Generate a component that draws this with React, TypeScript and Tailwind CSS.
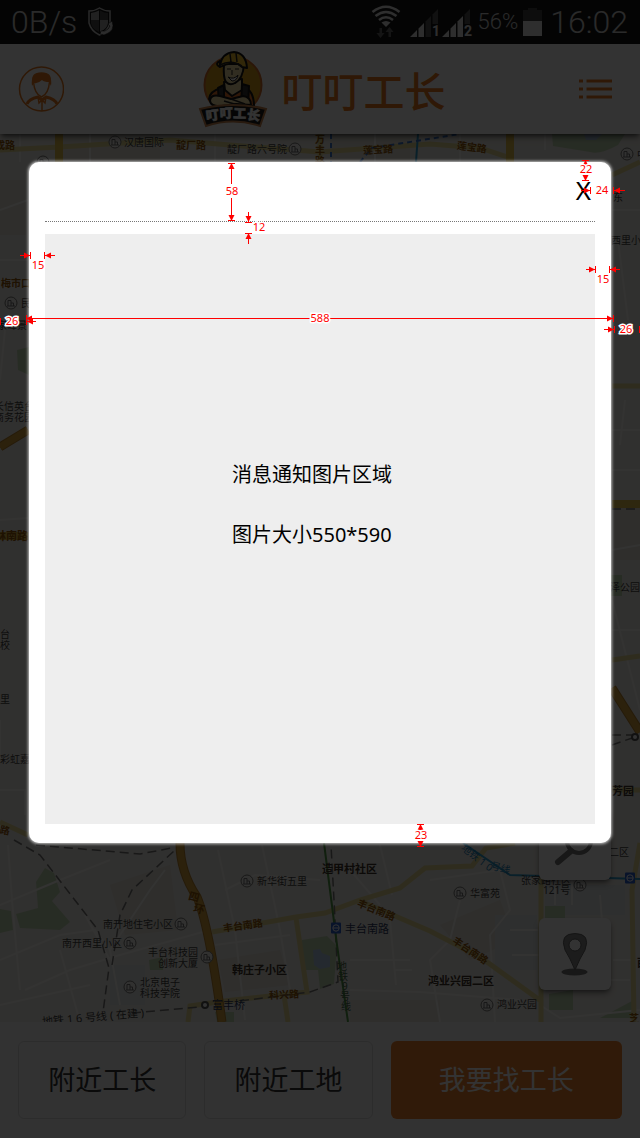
import React from "react";

const CJK = "font-['Noto_Sans','Noto_Sans_CJK_SC',sans-serif]";

type LabelProps = {
  x: number;
  y: number;
  text: string;
  size?: number;
  kind?: "place" | "area" | "road" | "station" | "green" | "blue";
  rotate?: number;
};

const labelColors = {
  place: "#444444",
  area: "#3f3428",
  road: "#95590a",
  station: "#2c3a62",
  green: "#46694b",
  blue: "#1c82b8",
};

function Label({ x, y, text, size = 10, kind = "place", rotate = 0 }: LabelProps) {
  return (
    <text
      x={x}
      y={y}
      fontSize={size}
      fill={labelColors[kind]}
      fontWeight={kind === "area" || kind === "road" ? 700 : 400}
      dominantBaseline="central"
      transform={rotate ? `rotate(${rotate} ${x} ${y})` : undefined}
    >
      {text}
    </text>
  );
}

function Poi({ x, y }: { x: number; y: number }) {
  return (
    <g transform={`translate(${x} ${y})`} fill="none" stroke="#777">
      <circle r="6" fill="#f4f2ee" />
      <path d="M-3 3V-2.500H0V3M0 0H2.500V3M-4 3H4" />
    </g>
  );
}

function Metro({ x, y }: { x: number; y: number }) {
  return (
    <g transform={`translate(${x} ${y})`} fill="none" stroke="#fff">
      <rect x="-5" y="-5.500" width="10" height="11" rx="1" fill="#2b5fd0" stroke="none" />
      <circle r="3.200" />
      <path d="M-3 0H3" />
    </g>
  );
}

function CityMap() {
  return (
    <svg
      className={`absolute inset-0 h-full w-full ${CJK}`}
      viewBox="0 134 640 888"
      preserveAspectRatio="xMidYMin slice"
      aria-label="地图"
    >
      <rect y="134" width="640" height="888" fill="#f1eee8" />
      <g fill="#e8e4db">
        <path d="M60 134H160V162H60zM330 134H410V162H330zM0 180H26V235H0zM614 500H640V560H614z" />
        <path d="M110 885 170 865 178 930 125 935zM218 960 280 950 290 985 225 992zM440 925 500 900 515 940 470 960zM350 1000H440V1022H350z" />
      </g>
      <g fill="#e3e8e8">
        <path d="M110 965H145V1005H110zM545 885H625V915H545zM495 915H537V970H495z" />
      </g>
      <g fill="#c4dbb6">
        <path d="M552 134H625L618 145Q600 155 590 152L553 146z" />
        <path d="M17 350 29 347V375L18 370zM611 575H622V596H611z" />
        <path d="M36 882 45 868 54 873 60 892 52 901 70 922 60 930 20 928 16 914 38 908zM0 909 11 911 13 930 0 933z" />
        <path d="M149 960 163 957V970L150 970z" />
        <path d="M302 940 327 936 337 946 334 984 320 989 318 970 302 970z" />
        <path d="M545 906H565V918H545zM549 994 573 990V1010H549zM600 1018 632 1001V1018zM215 1012H234V1022H217z" />
      </g>
      <path d="M584 134H602L596 140H586zM313 950 320 949 322 953 330 956V967L320 969 314 965z" fill="#b4cbe8" />
      <g fill="none" stroke="#fffdf8" strokeWidth="2">
        <path d="M8 845 12 900 20 990M0 905 60 880 110 860M0 960 60 935 95 930 110 950M25 990 70 970 120 955 210 930M85 915 110 960M60 950 80 1022M120 1005 110 950 150 890 165 870M0 1005 90 985" />
        <path d="M218 850 235 930 245 1020M262 845 280 930 290 990M225 890 255 875 320 880M350 870 380 905M380 845 392 895M390 920 396 985M350 960H410M395 970H412M215 945 290 935" />
        <path d="M430 880 500 870 510 910 490 935 495 1022M460 900 450 940 430 960 440 1022M510 930H540M512 955H540M555 880V905M572 880V905M600 895 605 960M613 960H632M545 980H630M350 990 420 992 520 1000M540 1005 560 1018 640 1010" />
        <path d="M20 134V162M90 134V162M215 134V162M375 134V162M460 134V162M545 134V150M0 210 28 200M0 260H28M5 330 0 380M612 210H640M618 240 628 320M612 430H640M625 400 620 445M612 470H640M612 550 640 545M612 600 640 710M612 630H640M0 520 28 518M0 790H25V815M0 720V760" />
      </g>
      <g fill="none" stroke="#e8dd95" strokeWidth="5">
        <path d="M0 150 60 147 170 140 230 145 320 152 430 144 480 148 510 158M320 134V162" />
        <path d="M0 822 28 835M612 386H640M612 660 640 656M612 175 640 162M612 790H640" />
        <path d="M212 932 296 917 325 913 360 900 400 888 425 868 472 866 486 848 515 843M360 901 430 931 480 957 541 1001M296 918 307 992 225 1001 190 1006 188 1022M284 995 288 1022M541 875V1022M640 843 632 890 634 1022" />
      </g>
      <g fill="none" stroke="#e7c14a" strokeWidth="8">
        <path d="M59 134V162M510 134V162M612 504H640M0 536H28" />
      </g>
      <g fill="none" stroke="#b98330" strokeWidth="9">
        <path d="M180 843Q180 872 197 897Q209 925 222 1022M0 447 28 430M612 688 640 732" />
      </g>
      <g fill="none" stroke="#d9a63c" strokeWidth="7">
        <path d="M180 843Q180 872 197 897Q209 925 222 1022M0 447 28 430M612 688 640 732" />
      </g>
      <g fill="none" stroke="#777" strokeWidth="1.500" strokeDasharray="9 5">
        <path d="M14 840 40 855 98 930 109 968 103 1012M112 965 120 915 132 890 175 850M36 845 140 854 172 848" />
        <path d="M132 1013 200 1007M240 1001 310 992 338 982 334 900 331 845M612 509H640M612 735H640M612 745 635 737" />
      </g>
      <g fill="none" strokeWidth="2">
        <path d="M324 843 337 945 348 1022" stroke="#4f9a46" />
        <path d="M463 843 510 875 640 879M418 134 416 162" stroke="#2f9fd0" />
        <path d="M360 162 372 148 460 134M331 134V162" stroke="#3d78cf" strokeDasharray="5 4" />
      </g>

      <Label x={-15} y={145} text="大成路" kind="road" />
      <Poi x={115} y={142} />
      <Label x={124} y={142} text="汉唐国际" />
      <Label x={176} y={145} text="靛厂路" kind="road" />
      <Label x={227} y={149} text="靛厂路六号院" />
      <Poi x={295} y={149} />
      <Label x={315} y={139} text="万" kind="road" />
      <Label x={315} y={150} text="丰" kind="road" />
      <Label x={315} y={161} text="路" kind="road" />
      <Label x={363} y={150} text="莲宝路" kind="road" rotate={-3} />
      <Label x={457} y={145} text="莲宝路" kind="road" rotate={7} />
      <Poi x={627} y={154} />
      <Label x={637} y={154} text="中" />
      <Poi x={43} y={162} />
      <Label x={613} y={197} text="东" />
      <Label x={611} y={240} text="西里小区" />

      <Label x={1} y={283} text="梅市口" kind="road" />
      <Poi x={11} y={303} />
      <Label x={21} y={303} text="民岳" />
      <Label x={-3} y={325} text="家峰景" />
      <Label x={-6} y={406} text="长信英台" />
      <Label x={-6} y={417} text="商务花园" />
      <Label x={-5} y={535} text="林南路" size={11} kind="road" />
      <Label x={0} y={634} text="台" />
      <Label x={0} y={645} text="校" />
      <Label x={0} y={699} text="里" />
      <Label x={0} y={759} text="彩虹嘉园" />
      <Label x={0} y={829} text="路" kind="road" rotate={10} />
      <Label x={610} y={587} text="泽公园" />
      <circle cx="635" cy="737" r="3" fill="#fff" stroke="#555" strokeWidth="2" />
      <Label x={612} y={790} text="芳园" size={11} kind="area" />
      <Label x={609} y={852} text="二区" />

      <Label x={189} y={895} text="四" kind="road" size={11} rotate={15} />
      <Label x={194} y={907} text="环" kind="road" size={11} rotate={15} />
      <Label x={103} y={924} text="南开地住宅小区" />
      <Poi x={181} y={924} />
      <Label x={62} y={943} text="南开西里小区" />
      <Poi x={130} y={943} />
      <Label x={148} y={952} text="丰台科技园" />
      <Label x={158} y={963} text="创新大厦" />
      <Poi x={207} y={957} />
      <Poi x={130} y={987} />
      <Label x={140} y={982} text="北京电子" />
      <Label x={140} y={993} text="科技学院" />
      <Label x={42} y={1021} text="地铁 1 6 号线 ( 在建 )" rotate={-5} size={11} />
      <circle cx="205" cy="1005" r="3" fill="#fff" stroke="#555" strokeWidth="2" />
      <Label x={212} y={1004} text="富丰桥" size={11} kind="station" />

      <Label x={322} y={868} text="造甲村社区" size={11} kind="area" />
      <Poi x={247} y={881} />
      <Label x={257} y={881} text="新华街五里" />
      <Label x={223} y={928} text="丰台南路" kind="road" rotate={-8} />
      <Label x={358} y={902} text="丰台南路" kind="road" rotate={22} />
      <Metro x={336} y={928} />
      <Label x={345} y={928} text="丰台南路" size={11} kind="station" />
      <Label x={232} y={969} text="韩庄子小区" size={11} kind="area" />
      <Label x={269} y={995} text="科兴路" kind="road" rotate={-3} />
      {["地", "铁", "9", "号", "线"].map((c, i) => (
        <Label key={c} x={c === "9" ? 342 : 337 + i} y={966 + i * 10} text={c} kind="green" />
      ))}

      <Label x={463} y={846} text="地铁 1 0" kind="blue" rotate={38} />
      <Label x={491} y={865} text="号线" kind="blue" rotate={15} />
      <Metro x={630} y={878} />
      <Label x={521} y={880} text="张家路社区" />
      <Label x={543} y={890} text="121号" />
      <Poi x={580} y={885} />
      <Poi x={460} y={893} />
      <Label x={470} y={893} text="华富苑" />
      <Label x={454} y={939} text="丰台南路" kind="road" rotate={34} />
      <Label x={428} y={980} text="鸿业兴园二区" size={11} kind="area" />
      <Poi x={487} y={1005} />
      <Label x={497} y={1004} text="鸿业兴园" />
      <Label x={637} y={962} text="西" size={11} kind="area" />
      <Label x={629} y={1018} text="芝" kind="road" />
    </svg>
  );
}

function ShieldIcon() {
  return (
    <svg className="ml-[10px] h-[30px] w-[28px]" viewBox="87 8 28 30" aria-hidden="true">
      <path d="M89 12Q95 12 99.500 9Q104 12 110 12V24Q108 32 99.500 36Q91 32 89 24z" fill="none" stroke="#ccc" strokeWidth="1.500" />
      <path d="M91 14Q96 13 99 11.500V21H91zM100 21H108V24Q107 30 100 33z" fill="#ccc" opacity=".8" />
      <path d="M100 11.500Q104 14 108 14V21H100zM91 21H99V33Q92 30 91 24z" fill="#ccc" opacity=".3" />
      <path d="M112 22Q116 32 104 36L100 35 101 32 105 32Q109 30 110 27L108 25z" fill="#ddd" stroke="#000" strokeWidth=".5" />
    </svg>
  );
}

function WifiIcon() {
  return (
    <svg className="h-[34px] w-[30px]" viewBox="373 4 30 34" fill="none" stroke="#e5e5e5" strokeWidth="2.500" aria-hidden="true">
      <path d="M374.500 11Q388 .5 401.500 11M377.500 15Q388 7 398.500 15M381 19Q388 13.500 395 19" />
      <path d="M383.500 21.500Q388 18.500 392.500 21.500L388 26z" fill="#e5e5e5" stroke="none" />
      <path d="M381.500 27h2.500v5h2.500l-4 5-4-5h3zM390.500 36h2.500v-5h2.500l-4-5-4 5h3z" fill="#666" stroke="none" />
    </svg>
  );
}

function SignalIcon({ sim, bars }: { sim: string; bars: number }) {
  return (
    <svg className="h-[32px] w-[32px] font-['Roboto',sans-serif]" viewBox="0 0 32 32" aria-hidden="true">
      <path d="M0 31 7 24V31zM8.500 22.500 14 17V31H8.500z" fill="#e5e5e5" />
      <path d="M15.500 15.500 21 10V31H15.500z" fill={bars > 2 ? "#e5e5e5" : "#555"} />
      <path d="M22.500 8.500 28 3V18H22.500z" fill="#555" />
      <text x="22" y="30" fontSize="14" fontWeight="700" fill="#e5e5e5">{sim}</text>
    </svg>
  );
}

function StatusBar() {
  return (
    <div className="flex h-11 items-center justify-between bg-[#181818] pl-[11px] pr-3 font-['Roboto',sans-serif] font-light text-[#d0d0d0]">
      <div className="flex items-center">
        <span className="text-[32px] leading-10">0B/s</span>
        <ShieldIcon />
      </div>
      <div className="flex items-center">
        <WifiIcon />
        <div className="ml-[9px] flex">
          <SignalIcon sim="1" bars={2} />
          <SignalIcon sim="2" bars={3} />
        </div>
        <span className="ml-1 text-[22px] leading-10">56%</span>
        <svg className="ml-[5px] h-[28px] w-[19px]" viewBox="0 0 19 28" aria-hidden="true">
          <path d="M0 2H5V0H14V2H19V13H0z" fill="#444" />
          <path d="M0 13H19V28H0z" fill="#e5e5e5" />
        </svg>
        <span className="ml-2 text-[32px] leading-10">16:02</span>
      </div>
    </div>
  );
}

function Mascot() {
  return (
    <svg className="h-20 w-[72px]" viewBox="196 49 72 80" aria-hidden="true">
      <circle cx="231" cy="85" r="28.500" fill="#dca01c" stroke="#d8702a" strokeWidth="2" />
      <g stroke="#161616" strokeWidth="2" strokeLinejoin="round">
        <path d="M207 99Q208 91 219 88L241 87Q252 90 252 106H215z" fill="#e8762a" />
        <path d="M222 82 223 90 230 96 240 90V79z" fill="#f3dfa5" />
        <path d="M216 88 222 85V106H217zM240 84 247 86 246 107H239z" fill="#333" />
        <path d="M222 64Q221 78 224 82Q228 86 233 83Q241 79 242 64z" fill="#f3dfa5" />
        <path d="M218 65Q220 53 232 52Q244 53 245 68L240 67 236 64Q227 62 218 67Q212 64 218 61z" fill="#f4c32e" />
        <path d="M208 101Q208 94 218 96L229 99 241 96Q249 97 249 105L234 104 220 106Q209 107 208 101z" fill="#f3dfa5" />
      </g>
      <path d="M228 54 229 62M234 53 235 62M218 65Q229 59 240 66" fill="none" stroke="#222" strokeWidth="1.500" />
      <path d="M225 69h4M233 69h4M230 70v5M226 77Q232 80 236 75Q235 81 230 81z" fill="#fff" stroke="#222" />
      <path d="M222 101 236 105M229 99 243 104" stroke="#222" strokeWidth="1.500" />
      <path d="M198 109Q231 101 264 109L258 126Q231 117 204 126z" fill="#1c1c1c" stroke="#c8814a" strokeWidth="2" />
      <g className="font-['Noto_Sans_CJK_SC',sans-serif]" fontSize="13" fontWeight="900" fill="#fff" stroke="#fff" strokeWidth=".6" textAnchor="middle">
        <text x="211" y="120" transform="rotate(-7 211 120)">叮</text>
        <text x="224.500" y="118" transform="rotate(-3 224 118)">叮</text>
        <text x="237.500" y="118" transform="rotate(3 237 118)">工</text>
        <text x="251" y="120" transform="rotate(8 251 120)">长</text>
      </g>
    </svg>
  );
}

function Header() {
  return (
    <header className="relative z-10 flex h-[90px] items-center justify-between bg-white pl-[18px] pr-7 shadow-md shadow-black/50">
      <button type="button" aria-label="个人中心">
        <svg className="block h-[46px] w-[46px]" viewBox="18 66 46 46" fill="none" stroke="#ea7b21" strokeWidth="1.500">
          <circle cx="41.500" cy="89" r="22" />
          <path d="M33.500 82Q31 73 41.500 73Q52 73 49.500 82Q48.500 94 41.500 97Q34.500 94 33.500 82z" />
          <path d="M32 86Q30 73 41.500 73Q53 73 51 86L49 82Q44 82 42 80Q38 84 34 83z" fill="#ea7b21" stroke="none" />
          <path d="M27 104Q29 99 38 97L42 100 46 97Q55 99 57 104" strokeWidth="3" />
          <path d="M38 97 39 103 42 100 45 103 46 97M42 101V111" />
        </svg>
      </button>
      <div className="flex items-center gap-3">
        <Mascot />
        <h1 className={`text-[41px] font-medium leading-[60px] text-[#ea7b21] font-['Noto_Sans_CJK_SC',sans-serif]`}>叮叮工长</h1>
      </div>
      <button type="button" aria-label="菜单">
        <svg className="block h-5 w-[33px]" viewBox="0 0 33 20" stroke="#ea7b21" strokeWidth="3">
          <path d="M0 2H4M7.500 2H33M0 10H4M7.500 10H33M0 18H4M7.500 18H33" />
        </svg>
      </button>
    </header>
  );
}

function MapTools() {
  return (
    <div className="absolute bottom-8 right-[29px] flex flex-col gap-[38px]">
      <button type="button" aria-label="搜索" className="flex h-[72px] w-[72px] items-center justify-center rounded-md bg-white shadow-md shadow-black/40">
        <svg className="h-12 w-12" viewBox="549 820 48 48" fill="none" stroke="#777">
          <circle cx="577" cy="841" r="12" strokeWidth="4" />
          <path d="M569 851 556 862" strokeWidth="6" strokeLinecap="round" />
        </svg>
      </button>
      <button type="button" aria-label="定位" className="flex h-[72px] w-[72px] items-center justify-center rounded-md bg-white shadow-md shadow-black/40">
        <svg className="h-12 w-12" viewBox="551 932 48 48">
          <ellipse cx="574.500" cy="974" rx="13" ry="3.500" fill="#777" />
          <path d="M575 972Q570 960 565 952Q559 935.500 575 935.500Q591 935.500 585 952Q580 960 575 972z" fill="#8a8a8a" stroke="#666" />
          <circle cx="575" cy="947" r="6" fill="#fff" stroke="#666" />
        </svg>
      </button>
    </div>
  );
}

function Footer() {
  const plain = "h-[78px] rounded-md border border-[#dcdcdc] bg-[#fafafa] text-[#333]";
  return (
    <footer className={`grid grid-cols-[168fr_168fr_231fr] gap-[18px] bg-[#fafafa] px-[18px] pb-[19px] pt-[19px] text-[27px] ${CJK}`}>
      <button type="button" className={plain}>附近工长</button>
      <button type="button" className={plain}>附近工地</button>
      <button type="button" className="h-[78px] rounded-md bg-[#f0822d] text-white">我要找工长</button>
    </footer>
  );
}

function Notice() {
  return (
    <section
      role="dialog"
      aria-label="消息通知"
      className={`rounded-[10px] bg-white px-4 pb-[19px] text-black shadow-[0_0_3px_1px_rgba(255,255,255,0.7)] ${CJK}`}
    >
      <div className="flex h-[60px] items-center justify-end border-b border-dotted border-[#777] pb-1 pr-1">
        <button type="button" aria-label="关闭" className="text-[26px] leading-8">X</button>
      </div>
      <div className="mt-3 flex aspect-[550/590] justify-center bg-[#eee] pr-4 pt-[211px] text-xl leading-[60px]">
        <div>
          <p>消息通知图片区域</p>
          <p>图片大小550*590</p>
        </div>
      </div>
    </section>
  );
}

type Dir = "up" | "down" | "left" | "right";

function Head({ x, y, dir }: { x: number; y: number; dir: Dir }) {
  const angle = { right: 0, down: 90, left: 180, up: 270 }[dir];
  return <path d="M0 0-6-3V3z" fill="#f00" stroke="none" transform={`translate(${x} ${y}) rotate(${angle})`} />;
}

function Measure({ x, y, text }: { x: number; y: number; text: string }) {
  return (
    <text x={x} y={y} textAnchor="middle" fill="#f00" stroke="#fff" strokeWidth="3" paintOrder="stroke" fontSize="11">
      {text}
    </text>
  );
}

function Dimensions() {
  return (
    <svg
      className={`pointer-events-none absolute inset-x-0 top-0 w-full ${CJK}`}
      viewBox="0 0 640 1138"
      fill="none"
      stroke="#f00"
      aria-label="尺寸标注"
    >
      <path d="M231.500 163V221M228 163.500H235M228 220.500H235" />
      <Head x={231.5} y={163} dir="up" />
      <Head x={231.5} y={221} dir="down" />
      <path d="M231.500 184V198" stroke="#fff" />
      <path d="M248.500 212V222M245 222.500H252M245 233.500H252M248.500 234V244" />
      <Head x={248.5} y={222} dir="down" />
      <Head x={248.5} y={233} dir="up" />
      <path d="M582 160.500H589M582 180.500H589M585.500 161V166M585.500 175V180" />
      <Head x={585.5} y={160} dir="up" />
      <Head x={585.5} y={181} dir="down" />
      <path d="M581 190.500H590M590.500 187V194M613.500 187V194M613 190.500H625" />
      <Head x={590} y={190.5} dir="right" />
      <Head x={614} y={190.5} dir="left" />
      <path d="M586 269.500H595M595.500 266V273M609.500 266V273M610 269.500H620" />
      <Head x={595} y={269.5} dir="right" />
      <Head x={610} y={269.5} dir="left" />
      <path d="M20 255.500H30M30.500 252V259M44.500 252V259M45 255.500H55" />
      <Head x={30} y={255.5} dir="right" />
      <Head x={45} y={255.5} dir="left" />
      <path d="M26 318.500H613M26.500 315V322M613.500 315V322" />
      <Head x={26} y={318.5} dir="left" />
      <Head x={613} y={318.5} dir="right" />
      <path d="M604 329.500H614M614.500 326V333M639.500 326V333M26.500 317V325M27 321.500H36M.500 318V325" />
      <Head x={614} y={329.5} dir="right" />
      <Head x={27} y={321.5} dir="left" />
      <path d="M417 824.500H424M417 846.500H424M420.500 825V830M420.500 841V847" />
      <Head x={420.5} y={824} dir="up" />
      <Head x={420.5} y={847} dir="down" />

      <Measure x={232} y={195} text="58" />
      <Measure x={259} y={231} text="12" />
      <Measure x={586} y={173} text="22" />
      <Measure x={602} y={194} text="24" />
      <Measure x={603} y={283} text="15" />
      <Measure x={38} y={269} text="15" />
      <Measure x={320} y={322} text="588" />
      <Measure x={12} y={325} text="26" />
      <Measure x={626} y={333} text="26" />
      <Measure x={421} y={839} text="23" />
    </svg>
  );
}

export default function App() {
  return (
    <div className="relative flex min-h-screen flex-col overflow-hidden bg-white">
      <StatusBar />
      <Header />
      <main className="relative min-h-[740px] flex-1 overflow-hidden">
        <CityMap />
        <MapTools />
      </main>
      <Footer />
      <div className="absolute inset-0 z-20 bg-black/80 px-[29px] pt-[162px]">
        <Notice />
        <Dimensions />
      </div>
    </div>
  );
}
